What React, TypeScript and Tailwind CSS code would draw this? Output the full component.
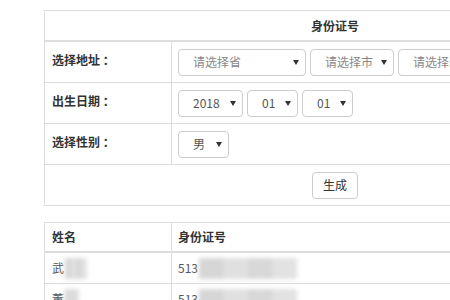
import React from "react"

const font = { fontFamily: '"Noto Sans CJK SC", "Liberation Sans", sans-serif' }

function Caret() {
  return <span className="ml-auto w-0 h-0 border-l-[3px] border-r-[3px] border-t-[5px] border-l-transparent border-r-transparent border-t-[#333]" />
}

function Select({ value, width, muted }: { value: string; width: string; muted?: boolean }) {
  return (
    <div className={`${width} h-[27px] shrink-0 flex items-center pl-[14px] pr-[6px] border border-[#ccc] rounded-[4px] bg-white text-[12px] ${muted ? "text-[#888]" : "text-[#555]"}`}>
      <span className="whitespace-nowrap overflow-hidden">{value}</span>
      <Caret />
    </div>
  )
}

function Blur({ w }: { w: string }) {
  return (
    <span className={`inline-flex ${w} h-[21px] ml-[1px] align-middle blur-[2px]`}>
      <span className="flex-1 bg-[#d6d6d6]" />
      <span className="flex-1 bg-[#e0e0e0]" />
      <span className="flex-1 bg-[#d8d8d8]" />
      <span className="flex-1 bg-[#e2e2e2]" />
    </span>
  )
}

export default function App() {
  return (
    <div className="w-[450px] h-[300px] overflow-hidden bg-white pl-[44px] pt-[10px] text-[#333]" style={font}>
      {/* Form table */}
      <div className="w-[582px] border border-[#ddd]">
        <div className="h-[31px] flex items-center justify-center border-b-2 border-[#ddd] text-[12px] font-bold">身份证号</div>

        <div className="flex h-[41px] border-b border-[#ddd]">
          <div className="w-[127px] shrink-0 border-r border-[#ddd] pl-[7px] pt-[9px] text-[12px] font-bold">选择地址 ：</div>
          <div className="flex items-center gap-[4px] pl-[6px]">
            <Select value="请选择省" width="w-[128px]" muted />
            <Select value="请选择市" width="w-[84px]" muted />
            <Select value="请选择区" width="w-[84px]" muted />
          </div>
        </div>

        <div className="flex h-[41px] border-b border-[#ddd]">
          <div className="w-[127px] shrink-0 border-r border-[#ddd] pl-[7px] pt-[9px] text-[12px] font-bold">出生日期 ：</div>
          <div className="flex items-center gap-[4px] pl-[6px]">
            <Select value="2018" width="w-[65px]" />
            <Select value="01" width="w-[51px]" />
            <Select value="01" width="w-[51px]" />
          </div>
        </div>

        <div className="flex h-[41px] border-b border-[#ddd]">
          <div className="w-[127px] shrink-0 border-r border-[#ddd] pl-[7px] pt-[9px] text-[12px] font-bold">选择性别 ：</div>
          <div className="flex items-center pl-[6px]">
            <Select value="男" width="w-[51px]" />
          </div>
        </div>

        <div className="h-[40px] flex items-center justify-center">
          <button className="h-[27px] px-[10px] border border-[#ccc] rounded-[4px] bg-white text-[12px] text-[#333]">生成</button>
        </div>
      </div>

      {/* Result table */}
      <div className="w-[582px] mt-[16px] border border-[#ddd] text-[12px]">
        <div className="flex h-[30px] border-b-2 border-[#ddd] font-bold">
          <div className="w-[127px] shrink-0 border-r border-[#ddd] pl-[7px] flex items-center">姓名</div>
          <div className="pl-[6px] flex items-center">身份证号</div>
        </div>
        <div className="flex h-[31px] border-b border-[#ddd] text-[#555]">
          <div className="w-[127px] shrink-0 border-r border-[#ddd] pl-[7px] flex items-center">武<Blur w="w-[22px]" /></div>
          <div className="pl-[6px] flex items-center">513<Blur w="w-[98px]" /></div>
        </div>
        <div className="flex h-[31px] border-b border-[#ddd] text-[#555]">
          <div className="w-[127px] shrink-0 border-r border-[#ddd] pl-[7px] flex items-center">董<Blur w="w-[14px]" /></div>
          <div className="pl-[6px] flex items-center">513<Blur w="w-[98px]" /></div>
        </div>
      </div>
    </div>
  )
}
